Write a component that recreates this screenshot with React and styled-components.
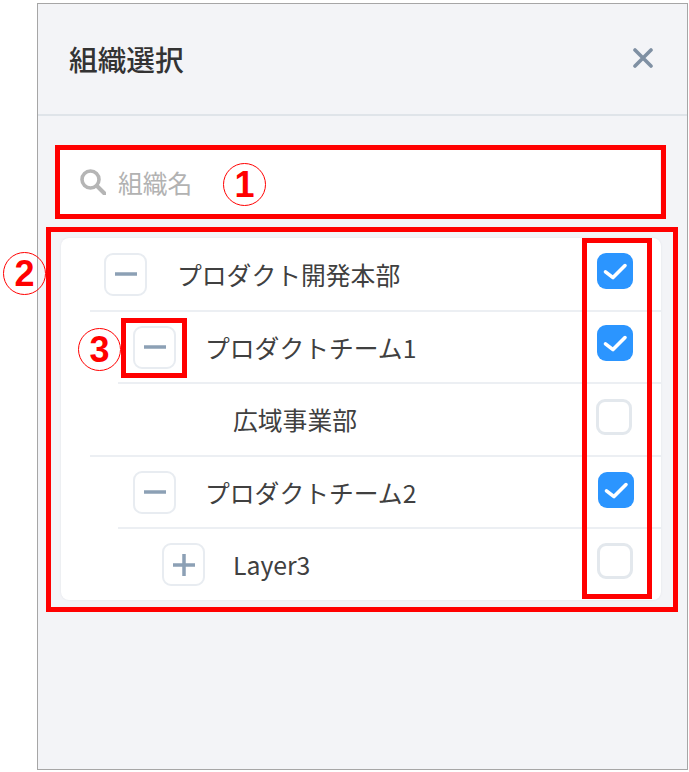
import React from "react";
import styled, { createGlobalStyle } from "styled-components";

const Global = createGlobalStyle`
  html, body { margin: 0; padding: 0; background: #fff; }
  * { box-sizing: border-box; }
  body { font-family: "Noto Sans CJK JP", "Noto Sans", sans-serif; }
`;

const Stage = styled.div`
  position: relative;
  width: 689px;
  height: 772px;
  padding: 3px 1px 2px 37px;
  overflow: hidden;
`;

const Panel = styled.section`
  width: 100%;
  height: 100%;
  display: flex;
  flex-direction: column;
  background: #f3f4f7;
  border: 1px solid #a6a6a6;
`;

const Header = styled.header`
  flex: none;
  height: 112px;
  display: flex;
  align-items: center;
  justify-content: space-between;
  padding: 0 34px 0 31px;
  border-bottom: 2px solid #dfe4e9;
`;

const Title = styled.h1`
  margin: 0;
  font-size: 28.7px;
  line-height: 1;
  font-weight: 500;
  color: #333;
`;

const CloseButton = styled.button`
  display: flex;
  padding: 0;
  margin: 0 0 2px;
  border: 0;
  background: none;
  color: #7f90a3;
`;

const SearchField = styled.div`
  flex: none;
  height: 64px;
  margin: 34px 27px 0 22px;
  padding: 0 20px;
  display: flex;
  align-items: center;
  gap: 12px;
  background: #fff;
`;

const Placeholder = styled.span`
  font-size: 24.8px;
  line-height: 1;
  color: #b2b2b2;
`;

const Card = styled.div`
  flex: none;
  margin: 24px 26px 0 23px;
  background: #fff;
  border-radius: 8px;
  box-shadow: 0 0 2px rgba(120, 130, 150, 0.15);
`;

const Row = styled.div`
  height: ${(p) => p.$height}px;
  margin-left: ${(p) => p.$rule}px;
  padding-left: ${(p) => p.$indent - p.$rule}px;
  display: flex;
  align-items: center;
  border-bottom: ${(p) => (p.$last ? "0" : "2px solid #eceff3")};
`;

const Toggle = styled.button`
  flex: none;
  width: 43px;
  height: 43px;
  margin-right: ${(p) => p.$gap}px;
  padding: 0;
  display: flex;
  align-items: center;
  justify-content: center;
  background: #fff;
  border: 2px solid #e8ecf1;
  border-radius: 9px;
  color: #8ca0b5;
`;

const Label = styled.span`
  flex: 1;
  font-size: 24.8px;
  line-height: 1;
  color: #404040;
  white-space: nowrap;
`;

const Check = styled.span`
  flex: none;
  width: 36px;
  height: 36px;
  margin-right: ${(p) => p.$right}px;
  margin-bottom: ${(p) => p.$lift}px;
  display: flex;
  align-items: center;
  justify-content: center;
  border-radius: 9px;
  background: ${(p) => (p.$on ? "#2b95ff" : "#fff")};
  border: ${(p) => (p.$on ? "0" : "3px solid #e3e8ed")};
`;

const Frame = styled.div`
  position: absolute;
  left: ${(p) => p.$x}px;
  top: ${(p) => p.$y}px;
  width: ${(p) => p.$w}px;
  height: ${(p) => p.$h}px;
  border: 5px solid #ff0000;
  pointer-events: none;
`;

const Marker = styled.span`
  position: absolute;
  left: ${(p) => p.$x}px;
  top: ${(p) => p.$y}px;
  width: 43px;
  height: 43px;
  display: flex;
  align-items: center;
  justify-content: center;
  border: 1px solid #ff0000;
  border-radius: 50%;
  color: #ff0000;
  font-family: "Liberation Sans", sans-serif;
  font-size: 36px;
  font-weight: 700;
  line-height: 1;
`;

const MinusIcon = () => (
  <svg width="22" height="22" viewBox="0 0 22 22" aria-hidden="true">
    <path d="M0 11H22" stroke="currentColor" strokeWidth="3.5" />
  </svg>
);

const PlusIcon = () => (
  <svg width="22" height="22" viewBox="0 0 22 22" aria-hidden="true">
    <path d="M0 11H22M11 0V22" stroke="currentColor" strokeWidth="3.5" />
  </svg>
);

const CheckIcon = () => (
  <svg width="36" height="36" viewBox="0 0 36 36" aria-hidden="true">
    <path d="M8.5 18.8L16 24.6L28 12.6" fill="none" stroke="#fff" strokeWidth="3.6" strokeLinecap="round" strokeLinejoin="round" />
  </svg>
);

const rows = [
  { label: "プロダクト開発本部", indent: 43, gap: 30, rule: 29, height: 74, toggle: "minus", on: true, right: 28, lift: 6 },
  { label: "プロダクトチーム1", indent: 72, gap: 29, rule: 57, height: 72, toggle: "minus", on: true, right: 28, lift: 8 },
  { label: "広域事業部", indent: 172, rule: 29, height: 73, on: false, right: 29, lift: 6 },
  { label: "プロダクトチーム2", indent: 72, gap: 29, rule: 57, height: 72, toggle: "minus", on: true, right: 27, lift: 4 },
  { label: "Layer3", indent: 101, gap: 28, rule: 57, height: 71, toggle: "plus", on: false, right: 28, lift: 7, last: true },
];

export default function App() {
  return (
    <Stage>
      <Global />
      <Panel>
        <Header>
          <Title>組織選択</Title>
          <CloseButton aria-label="閉じる">
            <svg width="20" height="20" viewBox="0 0 20 20" aria-hidden="true">
              <path d="M2 2L18 18M18 2L2 18" stroke="currentColor" strokeWidth="3.6" strokeLinecap="round" />
            </svg>
          </CloseButton>
        </Header>
        <SearchField>
          <svg width="26" height="26" viewBox="0 0 26 26" aria-hidden="true">
            <circle cx="10.5" cy="10.5" r="8.5" fill="none" stroke="#b5b5b5" strokeWidth="3.6" />
            <path d="M17 17L24.5 24.5" stroke="#b5b5b5" strokeWidth="4" strokeLinecap="round" />
          </svg>
          <Placeholder>組織名</Placeholder>
        </SearchField>
        <Card>
          {rows.map((r) => (
            <Row key={r.label} $height={r.height} $rule={r.rule} $indent={r.indent} $last={r.last}>
              {r.toggle && (
                <Toggle $gap={r.gap} aria-label={r.toggle}>
                  {r.toggle === "minus" ? <MinusIcon /> : <PlusIcon />}
                </Toggle>
              )}
              <Label>{r.label}</Label>
              <Check $on={r.on} $right={r.right} $lift={r.lift}>
                {r.on && <CheckIcon />}
              </Check>
            </Row>
          ))}
        </Card>
      </Panel>
      <Frame $x={55} $y={145} $w={611} $h={74} />
      <Frame $x={46} $y={227} $w={632} $h={385} />
      <Frame $x={121} $y={318} $w={66} $h={60} />
      <Frame $x={582} $y={238} $w={70} $h={361} />
      <Marker $x={223} $y={163}>1</Marker>
      <Marker $x={3} $y={252}>2</Marker>
      <Marker $x={78} $y={328}>3</Marker>
    </Stage>
  );
}
